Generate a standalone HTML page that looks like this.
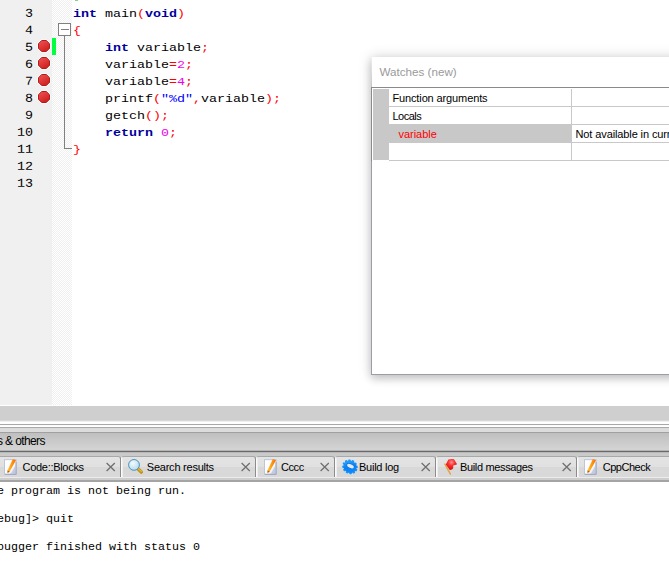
<!DOCTYPE html>
<html>
<head>
<meta charset="utf-8">
<title>Code::Blocks</title>
<style>
html,body{margin:0;padding:0;}
body{width:669px;height:563px;overflow:hidden;position:relative;background:#fff;font-family:"Liberation Sans",sans-serif;}
#editor{position:absolute;left:0;top:0;width:669px;height:406px;background:#fff;overflow:hidden;}
#lnm{position:absolute;left:0;top:0;width:52px;height:405px;background:#f0f0f0;}
#fm{position:absolute;left:52px;top:0;width:20px;height:405px;
 background-color:#fff;
 background-image:conic-gradient(#f0f0f0 25%,#fff 0 50%,#f0f0f0 0 75%,#fff 0);
 background-size:2px 2px;}
.ln{position:absolute;left:0;width:27.2px;transform-origin:0 0;text-align:right;height:14px;line-height:19px;
 font-family:"Liberation Mono",monospace;font-size:11px;transform:translateY(-0.4px) scale(1.2121,1.1) rotate(0.03deg);color:#000;}
.cl{position:absolute;left:73.3px;transform-origin:0 0;height:17px;line-height:21.6px;white-space:pre;
 font-family:"Liberation Mono",monospace;font-size:11px;transform:scaleX(1.2121);color:#000;}
.k{color:#0000a0;font-weight:bold;}
.o{color:#ff0000;}
.n{color:#f000f0;}
.s{color:#0000ff;}
.bp{position:absolute;left:36px;width:16px;height:16px;}
#chg{position:absolute;left:52px;top:38px;width:4px;height:17px;background:#00ff40;}

/* bottom panel */
#band{position:absolute;left:0;top:406px;width:669px;height:15px;background:#cfcfcf;}
#sash{position:absolute;left:0;top:420px;width:669px;height:13px;
 background:linear-gradient(#d6d6d6 0,#d6d6d6 1px,#f0f0f0 1px,#f0f0f0 2px,#fff 2px,#fff 4px,#a8a8a8 4px,#a8a8a8 5px,#f8f8f8 5px,#fff 6px,#fff 7px,#a8a8a8 7px,#a8a8a8 8px,#dcdcdc 8px,#dcdcdc 12px,#a0a0a0 12px,#a0a0a0 13px);}
#cap{position:absolute;left:0;top:433px;width:669px;height:18px;background:linear-gradient(#bfbfbf,#d6d6d6);}
#cap span{position:absolute;left:-3px;top:-1px;line-height:18px;font-size:12px;letter-spacing:-0.62px;color:#000;white-space:pre;}
#capline{position:absolute;left:0;top:450px;width:669px;height:3px;background:linear-gradient(#b4b4b4 0,#b4b4b4 1px,#6a6a6a 1px,#6a6a6a 2px,#b8b8b8 2px,#b8b8b8 3px);}
#tabs{position:absolute;left:0;top:453px;width:669px;height:27px;background:#cacaca;}
#tabs:after{content:"";position:absolute;left:0;top:24px;width:669px;height:3px;background:linear-gradient(#ececec 0,#ececec 1px,#cdcdcd 1px,#cdcdcd 3px);}
#tabline{position:absolute;left:0;top:480px;width:669px;height:2px;background:#a4a4a4;}
#log{position:absolute;left:0;top:482px;width:669px;height:81px;background:#fff;}
.tab{position:absolute;top:3px;height:21px;box-sizing:border-box;border-top:1px solid #a8a8a8;border-right:1px solid #8c8c8c;border-left:1px solid #fafafa;
 border-radius:3px 3px 0 0;background:linear-gradient(#e4e4e4 0,#e0e0e0 50%,#d8d8d8 50%,#d9d9d9 100%);box-shadow:inset 1px 0 0 #eeeeee;}
.tab .t{position:absolute;top:0;line-height:20px;font-size:11px;color:#000;white-space:pre;}
.tab svg{position:absolute;overflow:visible;}
.lg{position:absolute;left:-17px;height:14px;line-height:14px;white-space:pre;transform-origin:0 0;transform:scaleX(1.1667);font-family:"Liberation Mono",monospace;font-size:10px;color:#000;}
/* watches */
#w{position:absolute;left:371px;top:57px;width:320px;height:318px;background:#fff;box-sizing:border-box;border-bottom:1px solid #9c9ca6;
 box-shadow:0 0 12px rgba(0,0,0,0.17),0 4px 8px rgba(0,0,0,0.16);}
#w:before{content:"";position:absolute;left:0;top:0;width:1px;height:318px;background:linear-gradient(rgba(156,156,166,0.15) 0,rgba(156,156,166,0.5) 25px,#9c9ca6 50px,#9c9ca6 100%);}
#wt{position:absolute;left:8.5px;top:8px;font-size:11.65px;line-height:14px;color:#9a9a9a;white-space:pre;}
#grid{position:absolute;left:0px;top:30px;width:320px;height:73px;border-top:1px solid #8a8a8a;border-left:1px solid #8a8a8a;}
#gm{position:absolute;left:1px;top:1px;width:16px;height:71px;background:#c8c8c8;}
.row{position:absolute;left:17px;width:303px;height:17px;border-bottom:1px solid #c8c8c8;}
.row .a{position:absolute;left:0;top:0;width:182px;height:17px;border-right:1px solid #c8c8c8;}
.row .tx{position:absolute;top:0;line-height:18.6px;font-size:11px;white-space:pre;color:#000;}
</style>
</head>
<body>
<div id="editor">
 <div id="lnm"></div>
 <div id="fm"></div>
 <div id="chg"></div>
 <!-- line numbers -->
 <div class="ln" style="top:4px">3</div>
 <div class="ln" style="top:21px">4</div>
 <div class="ln" style="top:38px">5</div>
 <div class="ln" style="top:55px">6</div>
 <div class="ln" style="top:72px">7</div>
 <div class="ln" style="top:89px">8</div>
 <div class="ln" style="top:106px">9</div>
 <div class="ln" style="top:123px">10</div>
 <div class="ln" style="top:140px">11</div>
 <div class="ln" style="top:157px">12</div>
 <div class="ln" style="top:174px">13</div>
 <!-- breakpoints -->
 <svg class="bp" style="top:38px" viewBox="0 0 16 16"><use href="#ibp"/></svg>
 <svg class="bp" style="top:55px" viewBox="0 0 16 16"><use href="#ibp"/></svg>
 <svg class="bp" style="top:72px" viewBox="0 0 16 16"><use href="#ibp"/></svg>
 <svg class="bp" style="top:89px" viewBox="0 0 16 16"><use href="#ibp"/></svg>
 <!-- fold -->
 <svg style="position:absolute;left:52px;top:0" width="20" height="406" shape-rendering="crispEdges">
  <rect x="6.5" y="23.5" width="12" height="12" fill="#fff" stroke="#808080"/>
  <line x1="9" y1="29.5" x2="17" y2="29.5" stroke="#808080"/>
  <line x1="12.5" y1="36" x2="12.5" y2="149" stroke="#808080"/>
  <line x1="12" y1="148.5" x2="20" y2="148.5" stroke="#808080"/>
 </svg>
 <!-- code -->
 <div style="position:absolute;left:75px;top:0;width:3px;height:1px;background:#8cd08c"></div>
 <div class="cl" style="top:4px"><span class="k">int</span> main<span class="o">(</span><span class="k">void</span><span class="o">)</span></div>
 <div class="cl" style="top:21px"><span class="o">{</span></div>
 <div class="cl" style="top:38px">    <span class="k">int</span> variable<span class="o">;</span></div>
 <div class="cl" style="top:55px">    variable<span class="o">=</span><span class="n">2</span><span class="o">;</span></div>
 <div class="cl" style="top:72px">    variable<span class="o">=</span><span class="n">4</span><span class="o">;</span></div>
 <div class="cl" style="top:89px">    printf<span class="o">(</span><span class="s">"%d"</span><span class="o">,</span>variable<span class="o">);</span></div>
 <div class="cl" style="top:106px">    getch<span class="o">();</span></div>
 <div class="cl" style="top:123px">    <span class="k">return</span> <span class="n">0</span><span class="o">;</span></div>
 <div class="cl" style="top:140px"><span class="o">}</span></div>
</div>

<div id="band"></div>
<div id="sash"></div>
<div id="cap"><span>s &amp; others</span></div>
<div id="capline"></div>
<svg width="0" height="0" style="position:absolute">
 <defs>
  <linearGradient id="gp" x1="0" y1="0" x2="1" y2="0"><stop offset="0" stop-color="#ffc030"/><stop offset="0.5" stop-color="#ff9a10"/><stop offset="1" stop-color="#f86a00"/></linearGradient>
  <linearGradient id="gpg" x1="0" y1="0" x2="1" y2="1"><stop offset="0" stop-color="#ffffff"/><stop offset="0.6" stop-color="#fbfbfe"/><stop offset="1" stop-color="#c4cce0"/></linearGradient>
  <radialGradient id="gl" cx="0.4" cy="0.35" r="0.7"><stop offset="0" stop-color="#f4fafd"/><stop offset="1" stop-color="#b4d8ea"/></radialGradient>
  <linearGradient id="gg" x1="0" y1="0" x2="1" y2="1"><stop offset="0" stop-color="#30b0ff"/><stop offset="0.5" stop-color="#0a80f0"/><stop offset="1" stop-color="#1090ff"/></linearGradient>
  <radialGradient id="gf" cx="0.5" cy="0.3" r="0.6"><stop offset="0" stop-color="#ff9090"/><stop offset="0.5" stop-color="#f83030"/><stop offset="1" stop-color="#e01010"/></radialGradient>
  <symbol id="ipage" viewBox="0 0 16 16" overflow="visible">
   <rect x="2.5" y="0.7" width="11.6" height="14.6" fill="url(#gpg)" stroke="#b8c0d6" stroke-width="0.9"/>
   <path d="M14.1 3 L14.1 15.3 L3 15.3" fill="none" stroke="#98a0bc" stroke-width="0.9"/>
   <path d="M13.6 6 L13.6 14.8 L9 14.8 Z" fill="#b8c0d8" opacity="0.7"/>
   <path d="M10.8 0 L14 1.3 L7.7 12.5 L5.6 14 L5.5 11.4 Z" fill="url(#gp)"/>
   <path d="M5.5 11.4 L7.7 12.5 L5.6 14 Z" fill="#a85420"/>
  </symbol>
  <symbol id="isearch" viewBox="0 0 16 16" overflow="visible">
   <path d="M11.2 10.1 L14.3 13.1" stroke="#c09418" stroke-width="3.5" stroke-linecap="round"/>
   <path d="M11.6 9.9 L14.6 12.4" stroke="#dcb638" stroke-width="1.3" stroke-linecap="round"/>
   <circle cx="7" cy="5.9" r="5.4" fill="url(#gl)" stroke="#4a94bc" stroke-width="1"/>
  </symbol>
  <symbol id="igear" viewBox="0 0 16 16" overflow="visible">
   <g transform="translate(9,7.8) rotate(28) scale(1,0.9)">
    <g fill="#1c94ff">
     <rect x="-1.35" y="-8" width="2.7" height="16" rx="1"/>
     <rect x="-1.35" y="-8" width="2.7" height="16" rx="1" transform="rotate(30)"/>
     <rect x="-1.35" y="-8" width="2.7" height="16" rx="1" transform="rotate(60)"/>
     <rect x="-1.35" y="-8" width="2.7" height="16" rx="1" transform="rotate(90)"/>
     <rect x="-1.35" y="-8" width="2.7" height="16" rx="1" transform="rotate(120)"/>
     <rect x="-1.35" y="-8" width="2.7" height="16" rx="1" transform="rotate(150)"/>
    </g>
    <circle r="6.7" fill="url(#gg)"/>
   </g>
   <ellipse cx="9.4" cy="6.9" rx="4.1" ry="2.3" transform="rotate(25 9.4 6.9)" fill="#0a70e0"/>
   <ellipse cx="9.5" cy="7.1" rx="3.6" ry="1.9" transform="rotate(25 9.5 7.1)" fill="#e4e8f2"/>
  </symbol>
  <symbol id="iflag" viewBox="0 0 16 16" overflow="visible">
   <path d="M2.9 5.1 L8.4 15.2" stroke="#e2a64a" stroke-width="1.5" stroke-linecap="round"/>
   <path d="M3.8 5.6 L6.4 0.5 Q9 -0.2 12 0.2 L15.1 5.2 Q13.2 6.1 11.2 6.5 Q11.5 8.8 10.6 10 Q9.2 11.1 7.8 11 Z" fill="url(#gf)"/>
  </symbol>
  <symbol id="ibp" viewBox="0 0 16 16">
   <path d="M5.4 1.2 L10.6 1.2 L14.8 5.4 L14.8 10.6 L10.6 14.8 L5.4 14.8 L1.2 10.6 L1.2 5.4 Z" fill="#ffffff"/>
   <path d="M5.7 2.5 L10.3 2.5 L13.5 5.7 L13.5 10.3 L10.3 13.5 L5.7 13.5 L2.5 10.3 L2.5 5.7 Z" fill="url(#gbp)" stroke="#b41a1a" stroke-width="1" stroke-linejoin="round"/>
  </symbol>
  <linearGradient id="gbp" x1="0.2" y1="0" x2="0.8" y2="1"><stop offset="0" stop-color="#ee5050"/><stop offset="1" stop-color="#cc1c1c"/></linearGradient>
  <symbol id="ix" viewBox="0 0 10 10">
   <path d="M0.6 1 L8.8 9 M8.8 1 L0.6 9" stroke="#6e6e6e" stroke-width="1.25" fill="none"/>
  </symbol>
 </defs>
</svg>
<div id="tabs">
 <div class="tab" style="left:-4px;width:125px"><svg style="left:5px;top:2px" width="16" height="16"><use href="#ipage"/></svg><span class="t" style="left:25.5px;letter-spacing:-0.29px">Code::Blocks</span><svg style="left:109px;top:5px" width="10" height="10"><use href="#ix"/></svg></div>
 <div class="tab" style="left:121px;width:135px"><svg style="left:5px;top:2px" width="16" height="16"><use href="#isearch"/></svg><span class="t" style="left:24.8px;letter-spacing:-0.23px">Search results</span><svg style="left:119px;top:5px" width="10" height="10"><use href="#ix"/></svg></div>
 <div class="tab" style="left:256px;width:79px"><svg style="left:5px;top:2px" width="16" height="16"><use href="#ipage"/></svg><span class="t" style="left:24px;letter-spacing:-0.43px">Cccc</span><svg style="left:63px;top:5px" width="10" height="10"><use href="#ix"/></svg></div>
 <div class="tab" style="left:335px;width:101px"><svg style="left:5px;top:2px" width="16" height="16"><use href="#igear"/></svg><span class="t" style="left:23px;letter-spacing:-0.25px">Build log</span><svg style="left:85px;top:5px" width="10" height="10"><use href="#ix"/></svg></div>
 <div class="tab" style="left:436px;width:141px"><svg style="left:5px;top:2px" width="16" height="16"><use href="#iflag"/></svg><span class="t" style="left:23px;letter-spacing:-0.35px">Build messages</span><svg style="left:125px;top:5px" width="10" height="10"><use href="#ix"/></svg></div>
 <div class="tab" style="left:577px;width:124px"><svg style="left:4.2px;top:2px" width="16" height="16"><use href="#ipage"/></svg><span class="t" style="left:24.8px;letter-spacing:-0.5px">CppCheck</span></div>
</div>
<div id="tabline"></div>
<div id="log">
 <div class="lg" style="top:3px">The program is not being run.</div>
 <div class="lg" style="top:31px">[debug]&gt; quit</div>
 <div class="lg" style="top:59px">Debugger finished with status 0</div>
</div>
<div id="w">
 <div id="wt">Watches (new)</div>
 <div id="grid">
  <div id="gm"></div>
  <div class="row" style="top:1px"><div class="a"></div><span class="tx" style="left:3.4px;letter-spacing:-0.12px">Function arguments</span></div>
  <div class="row" style="top:19px"><div class="a"></div><span class="tx" style="left:3.4px;letter-spacing:-0.5px">Locals</span></div>
  <div class="row" style="top:37px"><div class="a" style="background:#c8c8c8"></div><span class="tx" style="left:9.4px;color:#ff0000">variable</span><span class="tx" style="left:186.5px;letter-spacing:-0.11px">Not available in current context</span></div>
  <div class="row" style="top:55px"><div class="a"></div></div>
 </div>
</div>
</body>
</html>
